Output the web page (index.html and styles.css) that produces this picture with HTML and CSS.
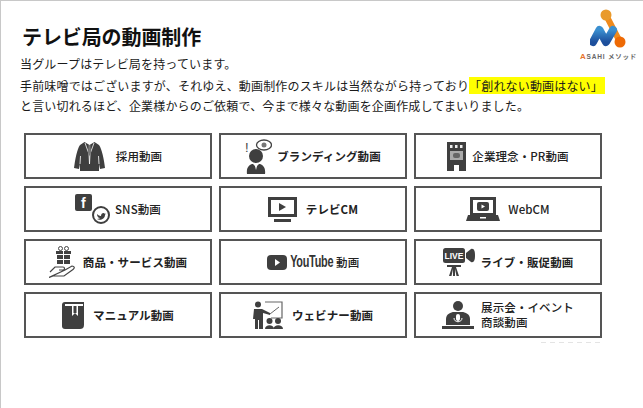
FILE: index.html
```html
<!DOCTYPE html>
<html lang="ja">
<head>
<meta charset="utf-8">
<title>テレビ局の動画制作</title>
<link rel="stylesheet" href="styles.css">
</head>
<body>
<main class="page">
  <div class="logo">
    <svg class="logo-mark" viewBox="0 0 40 40" width="40" height="40">
      <defs><linearGradient id="blue" x1="0" y1="0" x2="0" y2="1"><stop offset="0" stop-color="#3a8fd0"/><stop offset="1" stop-color="#1d4f9c"/></linearGradient></defs>
      <path d="M16 6 L30 33" fill="none" stroke="#f08a1c" stroke-width="6" stroke-linecap="round"/>
      <circle cx="16" cy="6" r="5.500" fill="#e99a2c"/>
      <circle cx="30" cy="33" r="5.500" fill="#ee6a05"/>
      <path d="M3 33 L9.500 21 L16 33 L23 21" fill="none" stroke="url(#blue)" stroke-width="8" stroke-linecap="round" stroke-linejoin="round"/>
    </svg>
    <div class="logo-text"><span class="logo-a">A</span>SAHI メソッド</div>
  </div>
  <h1 class="title">テレビ局の動画制作</h1>
  <p class="lead">当グループはテレビ局を持っています。</p>
  <p class="body">手前味噌ではございますが、それゆえ、動画制作のスキルは当然ながら持っており<mark class="hl">「創れない動画はない」</mark><br>と言い切れるほど、企業様からのご依頼で、今まで様々な動画を企画作成してまいりました。</p>
  <div class="grid">
    <div class="cell gap-11">
      <svg class="icon" width="31" height="29" viewBox="0 0 31 29"><path d="M10.500 0 L15.500 3 L20.500 0 L25 3 C28 7 30 18 31 26 L26 27 L25 22 L25 29 L6 29 L6 22 L5 27 L0 26 C1 18 3 7 6 3 Z" fill="#3f3f3f"/><path d="M11 1 L15 12 L15.500 22 M20 1 L16 12 L15.500 22 M6.500 14 L6 22 M24.500 14 L25 22" fill="none" stroke="#fff" stroke-width=".8"/><path d="M14.500 3 h2 l.5 8 l-1.500 3 l-1.500 -3z" fill="#777"/></svg>
      <span class="label">採用動画</span>
    </div>
    <div class="cell gap-5">
      <svg class="icon" width="27" height="35" viewBox="0 0 27 35"><text x="0" y="13" class="mark-ex">!</text><ellipse cx="19" cy="6" rx="7.500" ry="5" fill="none" stroke="#444" stroke-width="1.300"/><circle cx="19" cy="6" r="2.500" fill="#777"/><circle cx="11" cy="17" r="7" fill="#3f3f3f"/><path d="M2 35 C1 28 5 25 8 25 L11 28 L14 25 C17 25 21 28 20 35 Z" fill="#3f3f3f"/><path d="M10 27 h2 l-1 4z" fill="#fff"/></svg>
      <span class="label label-bold">ブランディング動画</span>
    </div>
    <div class="cell gap-6">
      <svg class="icon" width="19" height="29" viewBox="0 0 19 29"><path d="M0 0 H19 V29 H12 V23 H7 V29 H0 Z" fill="#3f3f3f"/><g fill="#eee"><rect x="3" y="3" width="2.500" height="3"/><rect x="8" y="3" width="2.500" height="3"/><rect x="13" y="3" width="2.500" height="3"/></g><rect x="3" y="9" width="13" height="9" fill="#aaa"/><rect x="6" y="11" width="7" height="5" rx="2" fill="#666"/></svg>
      <span class="label">企業理念・PR動画</span>
    </div>
    <div class="cell gap-5">
      <svg class="icon" width="35" height="30" viewBox="0 0 35 30"><rect x="0" y="0" width="17" height="17" rx="2" fill="#3f3f3f"/><text x="6" y="14" class="mark-f">f</text><circle cx="26" cy="21" r="8" fill="#fff" stroke="#3f3f3f" stroke-width="2"/><path d="M22 20 C24 22 26 22 26 22 C26 19 29 18 30 20 L31 19 L30 21 C30 25 25 27 22 25 C24 25 25 24 25 24 C23 24 22 22 22 20 Z" fill="#3f3f3f"/></svg>
      <span class="label">SNS動画</span>
    </div>
    <div class="cell gap-9">
      <svg class="icon" width="29" height="25" viewBox="0 0 29 25"><rect x="1.500" y="1.500" width="26" height="17" fill="none" stroke="#3f3f3f" stroke-width="3"/><path d="M11 6 L18 10 L11 14 Z" fill="#3f3f3f"/><rect x="6" y="22" width="17" height="3" fill="#3f3f3f"/></svg>
      <span class="label label-bold">テレビCM</span>
    </div>
    <div class="cell gap-8">
      <svg class="icon" width="34" height="24" viewBox="0 0 34 24"><path d="M4 0 H30 V18 H4 Z" fill="#3f3f3f"/><rect x="7" y="3" width="20" height="13" fill="#fff"/><rect x="11" y="5" width="12" height="9" rx="2" fill="#3f3f3f"/><path d="M15.500 7.500 L19 9.500 L15.500 11.500 Z" fill="#fff"/><path d="M2 18 H32 L34 24 H0 Z" fill="#3f3f3f"/><rect x="14" y="20" width="6" height="1.500" fill="#fff"/></svg>
      <span class="label">WebCM</span>
    </div>
    <div class="cell gap-8">
      <svg class="icon" width="26" height="32" viewBox="0 0 26 32"><g fill="#3f3f3f"><rect x="7" y="5" width="7" height="3"/><rect x="15" y="5" width="7" height="3"/><rect x="8" y="9" width="6" height="4"/><rect x="15" y="9" width="6" height="4"/><rect x="8" y="14" width="6" height="4"/><rect x="15" y="14" width="6" height="4"/></g><circle cx="11.500" cy="2.500" r="2" fill="none" stroke="#444"/><circle cx="17.500" cy="2.500" r="2" fill="none" stroke="#444"/><path d="M1 26 L6 21 H14 C16 21 16 24 14 24 H10 M16 24 L23 20 C25.500 20 26 22 24 23.500 L15 30 H4 L0 31.500 Z" fill="none" stroke="#444" stroke-width="1.200"/></svg>
      <span class="label label-bold">商品・サービス動画</span>
    </div>
    <div class="cell cell-yt">
      <svg class="icon" width="20" height="15" viewBox="0 0 20 15"><rect width="20" height="15" rx="4" fill="#3f3f3f"/><path d="M8 4 L13 7.500 L8 11 Z" fill="#fff"/></svg>
      <span class="yt">YouTube</span>
      <span class="label">動画</span>
    </div>
    <div class="cell gap-6">
      <svg class="icon" width="32" height="28" viewBox="0 0 32 28"><rect x="0" y="0" width="22" height="15" rx="2.500" fill="#3f3f3f"/><text x="11" y="11" text-anchor="middle" class="mark-live">LIVE</text><path d="M23 5 L28 1 C31 0 32 3 32 7.500 C32 12 31 15 28 14 L23 10 Z" fill="#3f3f3f"/><path d="M4 17 H18 V19 H13 L16 28 H13.500 L12 21 V28 H10 V21 L8.500 28 H6 L9 19 H4 Z" fill="#3f3f3f"/></svg>
      <span class="label label-bold">ライブ・販促動画</span>
    </div>
    <div class="cell gap-8">
      <svg class="icon" width="23" height="27" viewBox="0 0 23 27"><path d="M3 0 H22 V23 C22 26 20 27 18 27 H3 C1 27 0 26 0 24 V3 C0 1 1 0 3 0 Z" fill="#3f3f3f"/><path d="M3 2 H21 V4 H16 V14 L13 11 L10 14 V4 H3 Z" fill="#fff"/><rect x="11.500" y="4" width="3" height="7" fill="#3f3f3f"/></svg>
      <span class="label label-bold">マニュアル動画</span>
    </div>
    <div class="cell gap-8">
      <svg class="icon" width="31" height="28" viewBox="0 0 31 28"><path d="M12 1 H29 V17 H18" fill="none" stroke="#666" stroke-width="1.200"/><path d="M17 13 L26 6" stroke="#666"/><circle cx="5" cy="3.500" r="3" fill="#3f3f3f"/><path d="M1 8 H9 L17 12 V14 L10 12 V28 H6 V19 H5 V28 H2 V18 H0 Z" fill="#3f3f3f"/><g fill="#3f3f3f"><circle cx="16.500" cy="20" r="3"/><circle cx="25" cy="20" r="3"/><path d="M12 28 C12 23 21 23 21 28 Z"/><path d="M20.500 28 C20.500 23 30 23 30 28 Z"/></g></svg>
      <span class="label label-bold">ウェビナー動画</span>
    </div>
    <div class="cell gap-7">
      <svg class="icon" width="32" height="29" viewBox="0 0 32 29"><circle cx="16" cy="5" r="5" fill="#3f3f3f"/><path d="M4 24 V18 C4 13 9 11 12 11 H20 C23 11 28 13 28 18 V24 Z" fill="#3f3f3f"/><rect x="14" y="13" width="4" height="7" rx="2" fill="#fff"/><path d="M12 17 C12 22 20 22 20 17" fill="none" stroke="#fff"/><rect x="0" y="25" width="32" height="3" fill="#3f3f3f"/></svg>
      <span class="label label-two">展示会・イベント<br>商談動画</span>
    </div>
  </div>
  <div class="specks"></div>
</main>
</body>
</html>
```
FILE: styles.css
```css
* { box-sizing: border-box; }
html, body { margin: 0; height: 100%; overflow: hidden; background: #fff; }
.page {
  position: relative;
  height: 408px;
  border-top: 1px solid #c8c8c8;
  border-left: 1px solid #c8c8c8;
  padding: 22px 0 0 19px;
  font-family: "Noto Sans CJK JP", "Noto Sans", sans-serif;
  color: #1a1a1a;
}
.title { margin: 0 0 0 2px; font-size: 20px; letter-spacing: -.1px; line-height: 28px; font-weight: 700; color: #111; }
.lead, .body { margin: 0; font-size: 12px; letter-spacing: .17px; white-space: nowrap; }
.lead { line-height: 20px; margin-top: 3px; margin-bottom: 2px; }
.body { line-height: 20px; }
.hl { background: #ffff00; color: inherit; padding: 0 2px 0 0; }
.grid {
  display: grid;
  grid-template-columns: repeat(3, 188px);
  grid-auto-rows: 46px;
  gap: 7px;
  margin: 17px 0 0 4px;
}
.cell {
  display: flex;
  align-items: center;
  justify-content: center;
  gap: 8px;
  border: 2px solid #555;
  background: #fff;
}
.gap-5 { gap: 5px; }
.gap-6 { gap: 6px; }
.gap-7 { gap: 7px; }
.gap-8 { gap: 8px; }
.gap-9 { gap: 9px; }
.gap-11 { gap: 11px; }
.icon { flex: none; display: block; }
.label { font-size: 11.500px; font-weight: 500; letter-spacing: .1px; color: #222; white-space: nowrap; }
.label-bold { font-weight: 700; }
.label-two { line-height: 15px; text-align: left; }
.cell-yt { gap: 3px; }
.yt { display: inline-block; font-family: "Liberation Sans", sans-serif; font-size: 17px; font-weight: 700; letter-spacing: -.4px; color: #333; transform: scaleX(.64); margin: 0 -12px; }
.mark-ex { font-family: "Liberation Sans", sans-serif; font-size: 13px; fill: #444; }
.mark-f { font-family: "Liberation Sans", sans-serif; font-size: 14px; font-weight: 700; fill: #fff; }
.mark-live { font-family: "Liberation Sans", sans-serif; font-size: 8.500px; font-weight: 700; fill: #fff; }
.logo { position: absolute; top: 8px; right: 9px; width: 56px; display: flex; flex-direction: column; align-items: flex-start; }
.logo-mark { display: block; margin-left: 12px; }
.logo-text { font-family: "Liberation Sans", "Noto Sans CJK JP", sans-serif; font-size: 6.500px; font-weight: 700; letter-spacing: .8px; color: #666; white-space: nowrap; line-height: 9px; margin: 3px 0 0 2px; }
.logo-a { color: #e8742a; font-size: 8px; }
.specks { position: absolute; left: 540px; top: 341px; width: 60px; height: 1px; background: repeating-linear-gradient(90deg, #e4e4e4 0 5px, transparent 5px 9px); }
```
